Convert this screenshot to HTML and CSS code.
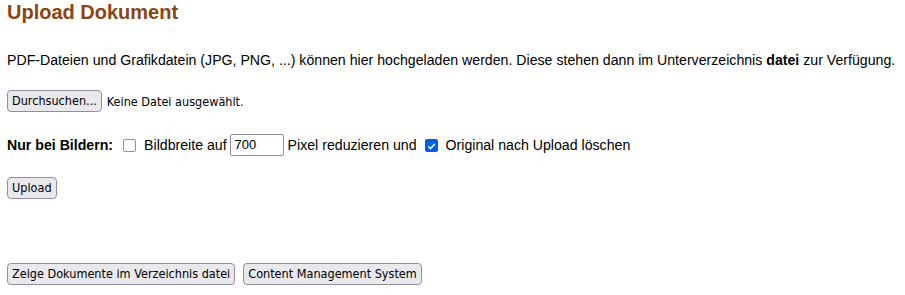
FILE: index.html
```html
<!DOCTYPE html>
<html lang="de">
<head>
<meta charset="utf-8">
<title>Upload Dokument</title>
<link rel="stylesheet" href="styles.css">
</head>
<body>
<h1 class="title">Upload Dokument</h1>
<p class="intro">PDF-Dateien und Grafikdatein (JPG, PNG, ...) können hier hochgeladen werden. Diese stehen dann im Unterverzeichnis <b>datei</b> zur Verfügung.</p>
<div class="file-row">
  <button class="btn" type="button">Durchsuchen...</button>
  <span class="file-name">Keine Datei ausgewählt.</span>
</div>
<div class="opts">
  <b class="opts-label">Nur bei Bildern:</b>
  <span class="cb cb-first"></span>
  <span>Bildbreite auf</span>
  <span class="num">700</span>
  <span>Pixel reduzieren und</span>
  <span class="cb checked"><svg viewBox="0 0 13 13" width="13" height="13"><path d="M3.2 6.8 L5.5 9 L9.9 4" fill="none" stroke="#fff" stroke-width="1.8" stroke-linecap="round" stroke-linejoin="round"/></svg></span>
  <span>Original nach Upload löschen</span>
</div>
<div class="upload-row">
  <button class="btn" type="button">Upload</button>
</div>
<div class="bottom-row">
  <button class="btn" type="button">Zeige Dokumente im Verzeichnis datei</button>
  <button class="btn" type="button">Content Management System</button>
</div>
</body>
</html>
```
FILE: styles.css
```css
html, body {
  margin: 0;
  background: #fff;
}
body {
  padding: 1px 7px 0;
  font-family: "Liberation Sans", Arial, sans-serif;
  font-size: 14.15px;
  color: #000;
}
.title {
  margin: 0;
  font-size: 20px;
  line-height: 23px;
  font-weight: bold;
  color: #8b4513;
}
.intro {
  margin: 28px 0 0;
  line-height: 16px;
  white-space: nowrap;
}
.btn {
  font-family: "DejaVu Sans Condensed", "DejaVu Sans", Tahoma, sans-serif;
  font-stretch: semi-condensed;
  font-size: 12.55px;
  line-height: 14px;
  height: 22px;
  padding: 0 4px;
  margin: 0;
  color: #000;
  background: #e9e9ed;
  border: 1px solid #8f8f9d;
  border-radius: 4px;
}
.file-row {
  margin-top: 22px;
  display: flex;
  align-items: center;
  gap: 5px;
}
.file-name {
  font-family: "DejaVu Sans Condensed", "DejaVu Sans", Tahoma, sans-serif;
  font-stretch: semi-condensed;
  font-size: 12.55px;
}
.opts {
  margin-top: 22px;
  display: flex;
  align-items: center;
  height: 22px;
}
.cb {
  width: 13px;
  height: 13px;
  box-sizing: border-box;
  border: 1px solid #8f8f9d;
  border-radius: 2px;
  display: inline-flex;
  margin: 0 8px;
}
.cb.cb-first {
  margin-left: 10px;
}
.cb.checked {
  background: #0060df;
  border-color: #0060df;
}
.num {
  box-sizing: border-box;
  width: 54px;
  height: 22px;
  border: 1px solid #8f8f9d;
  border-radius: 2px;
  font-size: 13px;
  line-height: 20px;
  padding: 0 4px;
  margin: 0 4px 0 3px;
}
.upload-row {
  margin-top: 21px;
}
.bottom-row {
  margin-top: 64px;
  display: flex;
  gap: 8px;
}
```
